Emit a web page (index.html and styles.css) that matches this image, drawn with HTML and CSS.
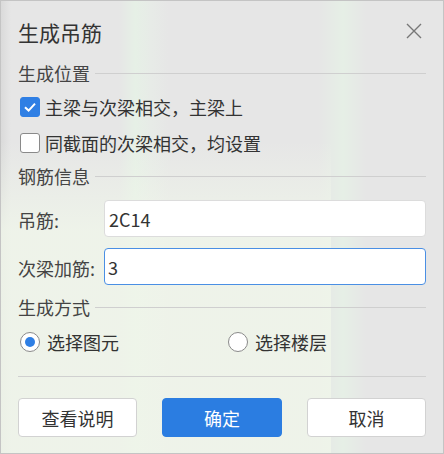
FILE: index.html
```html
<!DOCTYPE html>
<html>
  <head>
    <title>生成吊筋</title>
    <meta charset='utf-8'>
    <link rel="stylesheet" href="styles.css">
  </head>
  <body>
    <div class="dialog">
      <div class="header">
        <span class="title">生成吊筋</span>
        <svg class="close" width="16" height="16" viewBox="0 0 16 16">
          <path d="M1 1 L15 15 M15 1 L1 15" stroke="#777" stroke-width="1.4" fill="none"/>
        </svg>
      </div>

      <div class="section-head first"><span>生成位置</span></div>
      <label class="check-row">
        <span class="box checked">
          <svg width="14" height="14" viewBox="0 0 14 14"><path d="M2 7.2 L5.6 10.6 L12 3.6" stroke="#fff" stroke-width="2" fill="none"/></svg>
        </span>
        主梁与次梁相交，主梁上
      </label>
      <label class="check-row">
        <span class="box"></span>
        同截面的次梁相交，均设置
      </label>

      <div class="section-head second"><span>钢筋信息</span></div>
      <div class="field first-field">
        <span class="field-label">吊筋:</span>
        <div class="input">2C14</div>
      </div>
      <div class="field">
        <span class="field-label">次梁加筋:</span>
        <div class="input focused">3</div>
      </div>

      <div class="section-head third"><span>生成方式</span></div>
      <div class="radio-row">
        <label class="radio-item"><span class="radio on"></span>选择图元</label>
        <label class="radio-item"><span class="radio"></span>选择楼层</label>
      </div>

      <div class="divider"></div>

      <div class="buttons">
        <button class="btn">查看说明</button>
        <button class="btn primary">确定</button>
        <button class="btn">取消</button>
      </div>
    </div>
  </body>
</html>
```

FILE: styles.css
```css
html, body {
  margin: 0;
  padding: 0;
}
body {
  font-family: "Noto Sans CJK SC", "Noto Sans", sans-serif;
  color: #333;
}

.dialog {
  box-sizing: border-box;
  width: 444px;
  height: 454px;
  border: 1px solid #c4c4c4;
  padding: 0 17px 0 17px;
  background:
    linear-gradient(180deg, rgba(240, 246, 234, 0) 140px, rgba(240, 246, 234, 0.8) 230px) 0 0 / 330px 100% no-repeat,
    linear-gradient(90deg, #dadada 0, #e6e6e6 10px, #e6e6e6 118px, #e6f0e6 134px, #e7ebe7 150px,
      #e6e6e6 168px, #e6e6e6 318px, #e6efe6 342px, #e6e6e6 365px, #e6e6e6 100%);
}

/* header */
.header {
  height: 61px;
  display: flex;
  align-items: center;
  justify-content: space-between;
  padding: 0 4px 0 0;
}
.title {
  font-size: 21px;
  color: #333;
}
.close {
  margin-top: -1px;
}

/* section heading with rule */
.section-head {
  height: 22px;
  display: flex;
  align-items: center;
  font-size: 18px;
  color: #444;
}
.section-head::after {
  content: "";
  flex: 1;
  height: 1px;
  background: #cfcfcf;
  margin-left: 5px;
}
.section-head.second { margin-top: 4px; }
.section-head.third { margin-top: 11px; }

/* checkboxes */
.check-row {
  height: 36px;
  display: flex;
  align-items: center;
  font-size: 18px;
  padding-left: 2px;
}
.first + .check-row { margin-top: 5px; }
.box {
  box-sizing: border-box;
  width: 20px;
  height: 20px;
  border: 1px solid #8a8a8a;
  border-radius: 3px;
  background: #fff;
  margin-right: 5px;
  display: flex;
  align-items: center;
  justify-content: center;
}
.box.checked {
  background: #2f7fe4;
  border-color: #2f7fe4;
}

/* text fields */
.field {
  display: flex;
  align-items: center;
  margin-top: 11px;
}
.field.first-field { margin-top: 13px; }
.field-label {
  width: 86px;
  font-size: 18px;
  color: #444;
  padding-top: 3px;
}
.input {
  box-sizing: border-box;
  flex: 1;
  height: 37px;
  background: #fff;
  border: 1px solid #dcdcdc;
  border-radius: 4px;
  padding: 0 0 0 4px;
  display: flex;
  align-items: center;
  font-size: 18px;
  color: #333;
}
.input.focused {
  border-color: #4a8fe4;
  padding-left: 3px;
}

/* radios */
.radio-row {
  height: 36px;
  margin-top: 6px;
  display: grid;
  grid-template-columns: 208px 1fr;
  align-items: center;
  padding-left: 2px;
}
.radio-item {
  display: flex;
  align-items: center;
  font-size: 18px;
}
.radio {
  box-sizing: border-box;
  width: 20px;
  height: 20px;
  border: 1px solid #8a8a8a;
  border-radius: 50%;
  background: #fff;
  margin-right: 7px;
  display: flex;
  align-items: center;
  justify-content: center;
}
.radio.on::after {
  content: "";
  width: 10px;
  height: 10px;
  border-radius: 50%;
  background: #2f7fe4;
}

.divider {
  height: 1px;
  background: #d0d0d0;
  margin-top: 16px;
}

/* buttons */
.buttons {
  display: flex;
  justify-content: space-between;
  margin-top: 21px;
}
.btn {
  box-sizing: border-box;
  width: 119px;
  height: 39px;
  border: 1px solid #d2d2d2;
  border-radius: 4px;
  background: #fff;
  font-family: inherit;
  font-size: 18px;
  color: #333;
  padding: 0;
}
.btn.primary {
  width: 120px;
  background: #2b7de1;
  border-color: #2b7de1;
  color: #fff;
}
```
